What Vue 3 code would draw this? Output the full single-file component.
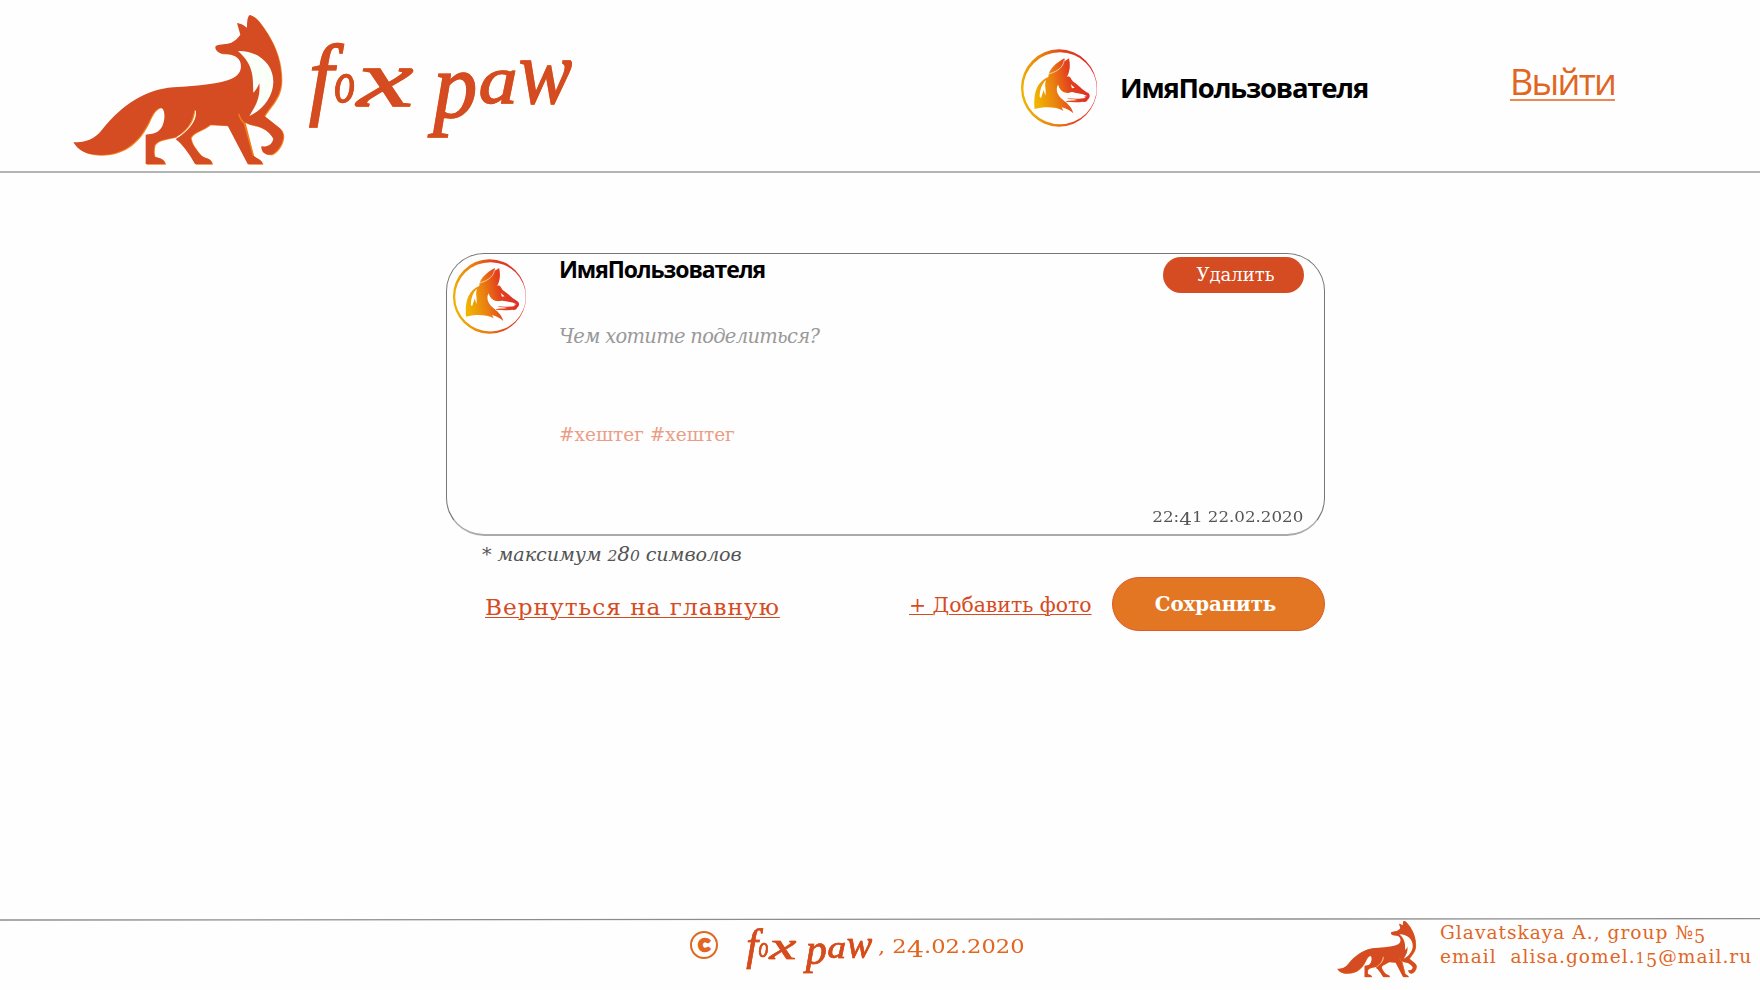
<script setup>
const letters = [
  { c: 'f', x: 56, y: 264, s: 275, w: 74 },
  { c: 'o', x: 133, y: 247, s: 180, w: 62 },
  { c: 'x', x: 202, y: 258, s: 240, w: 168 },
  { c: ' ', x: 374, y: 258, s: 100, w: 25 },
  { c: 'p', x: 430, y: 290, s: 278, w: 132 },
  { c: 'a', x: 566, y: 248, s: 200, w: 116 },
  { c: 'w', x: 686, y: 249, s: 270, w: 160 },
]
</script>

<template>
  <div class="page">
    <svg class="defs" aria-hidden="true">
      <defs>
        <linearGradient id="flame" x1="0" y1="0.6" x2="1" y2="0.4">
          <stop offset="0" stop-color="#f0b400" />
          <stop offset="0.35" stop-color="#ea8010" />
          <stop offset="0.65" stop-color="#e3401c" />
          <stop offset="1" stop-color="#dd2c2c" />
        </linearGradient>
        <path
          id="fox-body"
          d="M40 427C80 427 105 416 126 389C190 312 255 269 340 262C420 256 480 252 515 236C542 224 547 204 540 184C532 168 518 162 492 161C472 160 463 147 467 138C482 131 500 133 514 128C526 121 534 114 541 104L531 69C545 71 552 77 561 84C561 66 562 50 569 45C588 48 605 74 622 100C650 145 664 190 664 240C664 290 635 313 613 348L652 379C670 392 672 405 668 420C663 440 650 456 636 463C618 466 603 458 604 439C622 441 636 435 640 416C630 399 615 385 590 378C575 375 562 372 554 366L579 466C588 475 606 478 607 492L563 492L503 377L450 374C432 390 400 396 392 413C394 432 410 450 422 465C435 478 455 472 456 492L405 492C390 465 366 430 347 418C380 392 410 366 407 338C405 332 404 330 403 330C400 362 378 400 349 410C325 418 296 417 284 434C280 448 281 462 284 470C299 473 314 478 315 492L257 492L257 404C280 401 296 400 307 378C317 355 315 325 302 323C285 325 275 348 265 369C240 418 200 465 120 465C75 464 55 450 40 427Z"
        />
        <symbol id="fox" viewBox="0 0 720 540">
          <use href="#fox-body" x="3" y="2" fill="#f5821f" />
          <use href="#fox-body" fill="#d54b22" />
          <path d="M534 153C594 151 640 192 640 245C640 291 606 331 568 348C589 315 602 289 598 250C593 262 589 270 580 278C578 235 584 197 534 153Z" fill="#fafff8" />
          <path d="M536 342C541 356 545 364 553 370L580 467" fill="none" stroke="#f5821f" stroke-width="4" />
          <path d="M406 332C408 362 390 386 352 412" fill="none" stroke="#fff4e4" stroke-width="3.5" />
          <path d="M404 330C402 358 385 388 362 402" fill="none" stroke="#f5821f" stroke-width="3" />
        </symbol>
        <symbol id="avatar" viewBox="58 55 240 240">
          <path fill="url(#flame)" fill-rule="evenodd" d="M178 59A114 116 0 1 0 178 291A114 116 0 1 0 178 59ZM181 68A110 108 0 1 1 181 284A110 108 0 1 1 181 68Z" />
          <path
            fill="url(#flame)"
            d="M105 238C101 194 109 158 146 142C147 118 170 100 194 86L196 94L208 86C213 106 211 125 202 142C213 136 213 150 222 157C234 164 248 181 267 191C272 197 271 205 264 210C262 216 256 218 250 216C232 219 215 217 198 217C201 211 218 214 234 211C222 209 208 209 202 205C222 208 244 208 258 204C245 196 235 191 217 188C199 194 182 190 175 165C166 181 175 198 188 209C201 220 216 231 221 251C209 241 200 237 186 233L191 243C170 230 130 230 105 238Z"
          />
          <path d="M175 166C172 190 196 206 248 203L262 199L250 194L217 188C199 193 182 188 175 166Z" fill="#fff" />
          <path d="M120 202C120 178 128 161 139 151C133 168 141 181 137 198L132 181L124 205Z" fill="#fff" />
          <path d="M147 133C163 128 190 119 194 91" fill="none" stroke="#fff" stroke-width="2" />
          <path d="M213 164L225 174L217 176Z" fill="#fff" />
        </symbol>
      </defs>
    </svg>

    <header class="header">
      <svg class="fox"><use href="#fox" /></svg>
      <svg class="wordmark" viewBox="0 0 900 420">
        <text><tspan v-for="(l, i) in letters" :key="i" :x="l.x" :y="l.y" :font-size="l.s" :textLength="l.w" lengthAdjust="spacingAndGlyphs">{{ l.c }}</tspan></text>
      </svg>
      <svg class="avatar"><use href="#avatar" /></svg>
      <span class="user">ИмяПользователя</span>
      <a class="logout">Выйти</a>
    </header>

    <main class="main">
      <article class="card">
        <div class="portrait"><svg><use href="#avatar" /></svg></div>
        <div class="content">
          <div class="author">ИмяПользователя</div>
          <div class="prompt">Чем хотите поделиться?</div>
          <div class="tags">#хештег #хештег</div>
        </div>
        <div class="side">
          <button class="delete">Удалить</button>
          <time class="date">22:<span class="low">4</span>1 22.02.2020</time>
        </div>
      </article>
      <div class="hint">* максимум <span class="num">2<span class="tall">8</span>0</span> символов</div>
      <div class="actions">
        <a class="back">Вернуться на главную</a>
        <a class="photo">+ Добавить фото</a>
        <button class="save">Сохранить</button>
      </div>
    </main>

    <footer class="footer">
      <svg class="rule" viewBox="0 0 1760 3" preserveAspectRatio="none"><path d="M0 2L1760 .6" stroke="#8c8c8c" stroke-width="1.3" /></svg>
      <div class="foot-row">
        <span class="copy">C</span>
        <svg class="wordmark small" viewBox="0 0 900 420">
          <text><tspan v-for="(l, i) in letters" :key="i" :x="l.x" :y="l.y" :font-size="l.s" :textLength="l.w" lengthAdjust="spacingAndGlyphs">{{ l.c }}</tspan></text>
        </svg>
        <div class="year-box"><span class="year">, 2<span class="low">4</span>.02.2020</span></div>
        <svg class="fox small-fox"><use href="#fox" /></svg>
        <div class="contact">
          <div class="line1">Glavatskaya A., group №<span class="five">5</span></div>
          <div class="line2">email&nbsp; alisa.gomel.<span class="one">1</span><span class="five">5</span>@mail.ru</div>
        </div>
      </div>
    </footer>
  </div>
</template>

<style>
body { margin: 0; background: #fefefe; }
</style>

<style scoped>
.page {
  width: 1760px; height: 990px; overflow: hidden;
  display: flex; flex-direction: column;
  font-family: "DejaVu Serif", serif;
  background: #fefefe; white-space: nowrap;
}
.page * { box-sizing: border-box; }
.defs { position: absolute; width: 0; height: 0; }
svg { display: block; flex: none; }
button { font-family: inherit; padding: 0; margin: 0; }
.header {
  height: 173px; flex: none; display: flex; align-items: flex-start;
  border-bottom: 2px solid #b4b4b4;
}
.header .fox { width: 240px; height: 180px; margin-left: 60px; margin-right: -10px; }
.wordmark { width: 300px; height: 140px; margin-top: 20px; overflow: visible; filter: drop-shadow(.8px .2px 0 #f08a24); }
.wordmark text {
  font-family: "Liberation Serif", serif; font-style: italic;
  fill: #d54b22; stroke: #d54b22; stroke-width: 4px; white-space: pre;
}
.header .avatar { width: 80px; height: 80px; margin: 48px 0 0 429px; }
.user { font: 700 27.5px/40px "Open Sans", sans-serif; margin: 68px 0 0 21px; width: 390px; color: #000; letter-spacing: -1.2px; }
.logout { font: 400 36px/50px "Open Sans", sans-serif; color: #e1661f; height: 44px; margin-top: 57px; border-bottom: 2px solid #e98a53; letter-spacing: -1.7px; }

.main { width: 879px; height: 746px; margin-left: 446px; padding-top: 80px; flex: none; }
.card { height: 283px; border: 1px solid #777; border-radius: 38px; display: flex; border-bottom: 2px solid #aaa; }
.portrait { width: 79px; height: 84px; padding: 4px 0 0 4px; flex: none; }
.portrait svg { width: 77px; height: 77px; }
.content { margin-left: 33px; width: 604px; }
.author { font: 700 23px/30px "Open Sans", sans-serif; letter-spacing: -1.1px; }
.prompt { font-style: italic; font-size: 19.5px; line-height: 30px; margin-top: 38px; color: #999; letter-spacing: -.7px; }
.tags { font-size: 18.5px; line-height: 30px; margin-top: 68px; color: #eb9d85; }
.side { width: 141px; height: 279px; display: flex; flex-direction: column; justify-content: space-between; align-items: flex-end; }
.delete { width: 141px; height: 36px; margin-top: 3px; border: 0; border-radius: 18px; background: #d54b22; color: #fff; font-size: 18px; padding-left: 4px; padding-bottom: 2px; }
.date { color: #555; font-size: 14.5px; line-height: 24px; margin: 0 1px 4px 0; transform: scaleX(1.15); transform-origin: right; }
.low { font-size: 1.2em; vertical-align: -.2em; line-height: 0; }
.hint { font-style: italic; font-size: 19.2px; line-height: 30px; margin: 3px 0 0 36px; color: #555; letter-spacing: -.1px; }
.num { font-size: 15.5px; }
.tall { font-size: 20px; }
.actions { display: flex; align-items: center; height: 54px; margin-top: 6px; }
.back { margin-left: 39px; width: 424px; font-size: 23.2px; letter-spacing: 1px; color: #d54b22; padding-top: 4px; }
.back, .photo { text-decoration: underline; text-decoration-thickness: 1px; text-underline-offset: 2px; }
.photo { width: 203px; font-size: 20.4px; color: #d54b22; padding-top: 2px; }
.save { width: 213px; height: 54px; border: 1px solid #dc5a2c; border-radius: 27px; background: #e27622; color: #fff; font-weight: 700; font-size: 19.8px; padding-right: 6px; letter-spacing: -.1px; }

.footer { height: 71px; flex: none; }
.rule { width: 1760px; height: 3px; margin-top: -1px; }
.foot-row { display: flex; align-items: flex-start; color: #e1661f; }
.copy { width: 28px; height: 28px; margin: 10px 0 0 690px; border: 2px solid #e1661f; border-radius: 50%; font: 900 17px/24px Lato, sans-serif; -webkit-text-stroke: 2.4px #e1661f; text-align: center; flex: none; }
.small { width: 144px; height: 67px; margin: -3px 0 0 19px; filter: drop-shadow(.4px 0 0 #f08a24); }
.year-box { width: 448px; margin: 11px 0 0 -3px; flex: none; }
.year { display: inline-block; font-size: 18px; line-height: 30px; transform: scaleX(1.255); transform-origin: left; }
.small-fox { width: 91px; height: 68px; margin: -6px 0 0 6px; }
.contact { font-size: 18.6px; line-height: 24px; margin: 0 0 0 17px; letter-spacing: 1px; }
.five { font-size: .95em; vertical-align: -.2em; line-height: 0; }
.one { font-size: .8em; }
</style>
